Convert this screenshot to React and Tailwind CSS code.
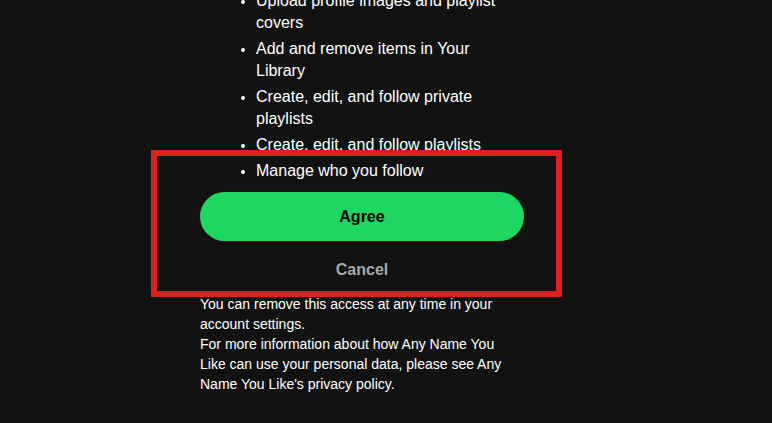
export default function App() {
  const items = [
    "Upload profile images and playlist covers",
    "Add and remove items in Your Library",
    "Create, edit, and follow private playlists",
    "Create, edit, and follow playlists",
    "Manage who you follow",
  ];
  return (
    <div
      className="relative h-[423px] w-[772px] overflow-hidden bg-[#121212] text-white"
      style={{ fontFamily: '"Liberation Sans", Arial, sans-serif' }}
    >
      <div className="ml-[200px] mt-[-10px] w-[324px]">
        <ul className="list-disc pl-[56px] pr-[8px] text-[16px] leading-[22px]">
          {items.map((t) => (
            <li key={t} className="mb-[4px] marker:text-[14px]">
              {t}
            </li>
          ))}
        </ul>
        <button className="mt-[10px] block h-[49px] w-full rounded-full bg-[#1ed760] text-[16px] font-bold text-black">
          Agree
        </button>
        <button className="mt-[5px] block h-[48px] w-full text-[16px] font-bold text-[#a7a7a7]">
          Cancel
        </button>
        <div className="w-[312px] text-[14px] leading-[20px]">
          <p>You can remove this access at any time in your account settings.</p>
          <p>
            For more information about how Any Name You Like can use your personal data, please see Any Name You
            Like's privacy policy.
          </p>
        </div>
      </div>
      <div className="absolute left-[151px] top-[150px] h-[147px] w-[411px] border-[6px] border-[#e01f1f]" />
    </div>
  );
}
